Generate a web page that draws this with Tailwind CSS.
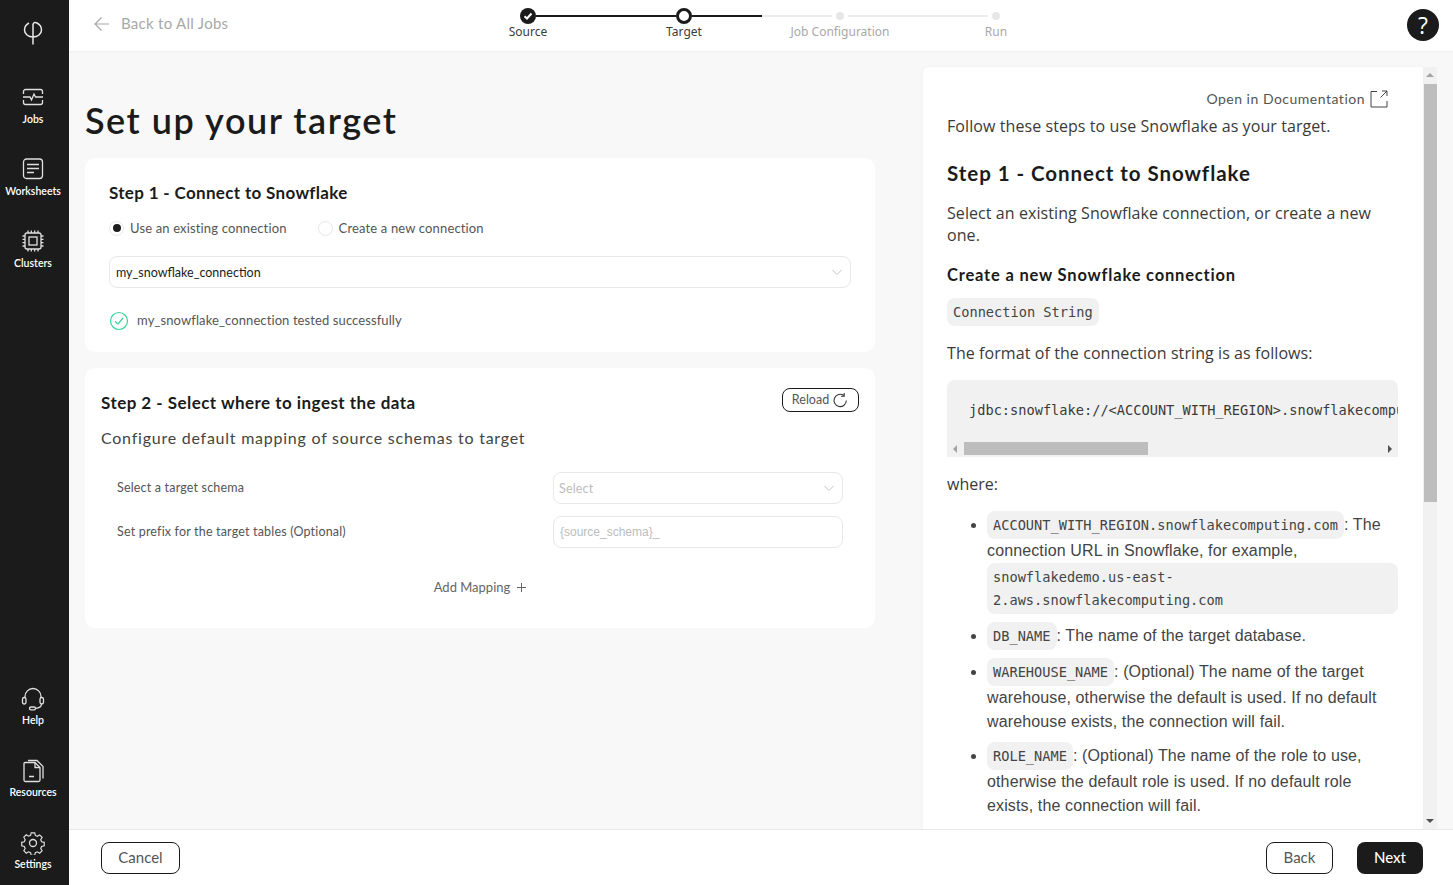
<!DOCTYPE html>
<html lang="en">
<head>
  <meta charset="UTF-8">
  <title>Set up your target</title>
  <script src="https://cdn.jsdelivr.net/npm/@tailwindcss/browser@4"></script>
</head>
<body class="h-[885px] w-[1453px] overflow-hidden flex bg-[#f8f8f8] text-[#1b1b1b] font-['Lato',sans-serif]">
  <!-- sidebar -->
  <aside class="w-[69px] h-full bg-[#1b1b1b] text-white flex flex-col items-center shrink-0 pr-[3px]">
    <div class="h-[85px] w-full flex justify-center pt-[20px]">
      <svg width="22" height="28" viewBox="22 20 22 28" fill="none" stroke="#e8e8e8" stroke-width="1.5"><path d="M29 23c-3 1.500-4.500 4-4.500 7 0 4 3.800 7 8.500 7s8.500-3 8.500-7c0-3-1.500-5.500-4.500-7-2-1-3.500-.5-4 1.500V44.500"/></svg>
    </div>
    <a class="h-[72px] flex flex-col items-center text-[10.5px] font-semibold">
      <svg class="w-6 h-6" viewBox="0 0 24 24" fill="none" stroke="#e0e0e0" stroke-width="1.3"><path d="M2.500 9V6.500a2 2 0 0 1 2-2h15a2 2 0 0 1 2 2V9M2.500 15v2.500a2 2 0 0 0 2 2h15a2 2 0 0 0 2-2V15M2 12h7l1.500 3 2.500-6 1.500 3h7.500"/></svg>
      <span class="mt-[3px]">Jobs</span>
    </a>
    <a class="h-[72px] flex flex-col items-center text-[10.5px] font-semibold">
      <svg class="w-6 h-6" viewBox="0 0 24 24" fill="none" stroke="#e0e0e0" stroke-width="1.300"><rect x="2.500" y="2" width="19" height="19.500" rx="3"/><path d="M6 7.500h12M6 11.500h12M6 15.500h7"/></svg>
      <span class="mt-[3px]">Worksheets</span>
    </a>
    <a class="h-[72px] flex flex-col items-center text-[10.5px] font-semibold">
      <svg class="w-6 h-6" viewBox="0 0 24 24" fill="none" stroke="#e0e0e0" stroke-width="1.300"><rect x="4" y="4" width="16" height="16" rx="2"/><rect x="8" y="8" width="8" height="8"/><path d="M7 1.500V4M10.300 1.500V4M13.700 1.500V4M17 1.500V4M7 20v2.500M10.300 20v2.500M13.700 20v2.500M17 20v2.500M1.500 7H4M1.500 10.300H4M1.500 13.700H4M1.500 17H4M20 7h2.500M20 10.300h2.500M20 13.700h2.500M20 17h2.500"/></svg>
      <span class="mt-[3px]">Clusters</span>
    </a>
    <a class="mt-auto h-[72px] flex flex-col items-center text-[10.5px] font-semibold">
      <svg class="w-6 h-6" viewBox="0 0 24 24" fill="none" stroke="#e0e0e0" stroke-width="1.300"><path d="M4 11V9.500a8 8 0 0 1 16 0V11"/><rect x="1.500" y="10.500" width="3.500" height="6.500" rx="1.700"/><rect x="19" y="10.500" width="3.500" height="6.500" rx="1.700"/><path d="M20.500 17c0 3-2.500 4-6 4.300"/><rect x="8.500" y="20" width="6" height="2.800" rx="1.400"/></svg>
      <span class="mt-[2px]">Help</span>
    </a>
    <a class="h-[72px] flex flex-col items-center text-[10.5px] font-semibold">
      <svg class="w-6 h-6" viewBox="0 0 24 24" fill="none" stroke="#e0e0e0" stroke-width="1.300"><path d="M4 3.500h10l5 5V21a1.500 1.500 0 0 1-1.500 1.500h-13A1.500 1.500 0 0 1 3 21V4.500a1 1 0 0 1 1-1z"/><path d="M7 1.500h9l6 6v12M14 3.500v5h5M10 10v.1M10 13.500v.1M8 17.500h5"/></svg>
      <span class="mt-[2px]">Resources</span>
    </a>
    <a class="h-[54px] flex flex-col items-center text-[10.5px] font-semibold">
      <svg class="w-6 h-6" viewBox="0 0 24 24" fill="none" stroke="#e0e0e0" stroke-width="1.300"><circle cx="12" cy="12" r="3.500"/><path d="M10 1.500h4l.7 3 2.300 1 2.600-1.600 2.800 2.800-1.600 2.600 1 2.300 3 .7v4l-3 .7-1 2.300 1.600 2.600-2.800 2.800-2.600-1.600-2.300 1-.7 3h-4l-.7-3-2.300-1-2.600 1.600-2.800-2.800 1.600-2.600-1-2.300-3-.7v-4l3-.7 1-2.300L1.600 6.500l2.800-2.800 2.600 1.600 2.300-1z" transform="translate(1.400 .5) scale(.88)"/></svg>
      <span class="mt-[2px]">Settings</span>
    </a>
  </aside>

  <div class="flex-1 min-w-0 flex flex-col">
    <!-- top bar -->
    <header class="h-[51px] bg-white shrink-0 flex shadow-[0_1px_2px_rgba(0,0,0,0.04)] relative">
      <div class="w-[381px] pl-[24px] pt-[12px] flex items-start gap-[11px] text-[15px] tracking-[0.28px] text-[#a8a8a8]">
        <svg class="w-[17px] h-[18px] mt-[3px]" viewBox="0 0 17 18" fill="none" stroke="#a8a8a8" stroke-width="1.200"><path d="M16 9H2M8.500 2.500 2 9l6.500 6.500"/></svg>
        <span>Back to All Jobs</span>
      </div>
      <div class="w-[624px] pt-2">
        <div class="flex items-center pl-[70px] h-4">
          <span class="w-4 h-4 rounded-full bg-[#1b1b1b] flex items-center justify-center">
            <svg width="10" height="10" viewBox="0 0 10 10" fill="none" stroke="#fff" stroke-width="2"><path d="M1.500 5.200 4 7.500 8.500 2.500"/></svg>
          </span>
          <span class="w-[140px] h-0.5 bg-[#1b1b1b]"></span>
          <span class="w-4 h-4 rounded-full border-[3px] border-[#1b1b1b] bg-white"></span>
          <span class="w-[70px] h-0.5 bg-[#1b1b1b]"></span>
          <span class="w-[70px] h-0.5 bg-[#ececec]"></span>
          <span class="w-2 h-2 mx-1 rounded-full bg-[#e6e6e6]"></span>
          <span class="w-[140px] h-0.5 bg-[#ececec]"></span>
          <span class="w-2 h-2 mx-1 rounded-full bg-[#e6e6e6]"></span>
        </div>
        <div class="grid grid-cols-4 text-center text-[12px] leading-4 mt-0 font-['Noto_Sans',sans-serif]">
          <span class="text-[#3c3c3c]">Source</span>
          <span class="text-[#3c3c3c]">Target</span>
          <span class="text-[#a8a8a8]">Job Configuration</span>
          <span class="text-[#a8a8a8]">Run</span>
        </div>
      </div>
      <div class="ml-auto pr-[14px] pt-[9px]">
        <div class="w-8 h-8 rounded-full bg-[#1b1b1b] text-white flex items-center justify-center text-[23px] font-normal font-['Open_Sans',sans-serif]">?</div>
      </div>
    </header>

    <div class="flex-1 min-h-0 flex">
      <!-- left column -->
      <main class="w-[854px] shrink-0 pl-4 pr-[48px]">
        <h1 class="text-[36px] leading-[44px] font-semibold mt-[47px] mb-[16px] tracking-[1.55px]">Set up your target</h1>

        <section class="bg-white rounded-[10px] h-[194px] px-6 pt-[25px]">
          <h2 class="text-[17px] leading-5 font-bold tracking-[0.33px]">Step 1 - Connect to Snowflake</h2>
          <div class="flex items-center mt-[15px] text-[13px] leading-[20px] tracking-[0.15px] text-[#555]">
            <span class="w-[15px] h-[15px] rounded-full border border-[#e6e6e6] flex items-center justify-center"><span class="w-[8px] h-[8px] rounded-full bg-[#1b1b1b]"></span></span>
            <span class="ml-[6px]">Use an existing connection</span>
            <span class="w-[15px] h-[15px] ml-[31px] rounded-full border border-[#e6e6e6]"></span>
            <span class="ml-[6px]">Create a new connection</span>
          </div>
          <div class="mt-[18px] h-8 border border-[#e8e8e8] rounded-[8px] flex items-center justify-between px-[6px] text-[12.5px]">
            <span class="pt-[2px]">my_snowflake_connection</span>
            <svg class="mr-[1px]" width="12" height="12" viewBox="0 0 12 12" fill="none" stroke="#c4c4c4"><path d="M1.500 4 6 8.500 10.500 4"/></svg>
          </div>
          <div class="flex items-center mt-[23px] text-[13px] tracking-[0.1px] text-[#555]">
            <svg width="20" height="20" viewBox="0 0 20 20" fill="none" stroke="#35d39a" stroke-width="1.200"><circle cx="10" cy="10" r="8.500"/><path d="M6 10.500 9 13l5-6"/></svg>
            <span class="ml-[8px]">my_snowflake_connection tested successfully</span>
          </div>
        </section>

        <section class="bg-white rounded-[10px] h-[260px] mt-4 px-4 pt-[20px]">
          <div class="flex justify-between items-start">
            <h2 class="text-[17px] leading-5 font-bold mt-[5px] tracking-[0.46px]">Step 2 - Select where to ingest the data</h2>
            <button class="h-6 w-[77px] border border-[#1b1b1b] rounded-[8px] flex items-center justify-center gap-[3px] text-[12.500px] text-[#555]">Reload
              <svg width="17" height="17" viewBox="0 0 16 16" fill="none" stroke="#333"><path d="M13.500 8A5.800 5.800 0 1 1 11 3.200M11.500 1v3h-3"/></svg>
            </button>
          </div>
          <p class="text-[16px] leading-6 mt-[13px] tracking-[0.76px] text-[#444]">Configure default mapping of source schemas to target</p>
          <div class="grid grid-cols-[436px_290px] gap-y-[12px] items-center mt-[22px] ml-4 text-[12.500px] tracking-[0.18px] text-[#555]">
            <span>Select a target schema</span>
            <div class="h-8 border border-[#e8e8e8] rounded-[8px] flex items-center justify-between px-[5px] text-[#bdbdbd]"><span class="pt-[2px]">Select</span>
              <svg class="mr-[2px]" width="12" height="12" viewBox="0 0 12 12" fill="none" stroke="#c4c4c4"><path d="M1.500 4 6 8.500 10.500 4"/></svg>
            </div>
            <span>Set prefix for the target tables (Optional)</span>
            <div class="h-8 border border-[#e8e8e8] rounded-[8px] flex items-center px-[6px] text-[#bdbdbd] text-[12px] tracking-normal font-['Liberation_Sans',sans-serif]">{source_schema}_</div>
          </div>
          <div class="flex justify-center items-center gap-[7px] mt-[30px] text-[13px] text-[#666]">Add Mapping
            <svg width="9" height="9" viewBox="0 0 9 9" stroke="#666"><path d="M4.500 0v9M0 4.500h9"/></svg>
          </div>
        </section>
      </main>

      <!-- documentation panel -->
      <div class="pt-4 flex items-stretch h-[778px]">
        <article class="w-[500px] h-full overflow-hidden bg-white rounded-tl-[6px] pl-6 pr-[25px] pt-[22px] font-['Open_Sans',sans-serif] text-[#3a3a3a] text-[16px] leading-[22px] shadow-[0_0_4px_rgba(0,0,0,0.04)]">
          <a class="flex justify-end items-center gap-[5px] pr-[10px] text-[14px] leading-5 tracking-[0.5px] font-['Lato',sans-serif] text-[#555]">Open in Documentation
            <svg width="18" height="18" viewBox="0 0 18 18" fill="none" stroke="#444"><path d="M7 1.500H1v15.500h16V11M10.500 7.500 17 1M12 1h5v5"/></svg>
          </a>
          <p class="mt-[6px] tracking-[0.08px]">Follow these steps to use Snowflake as your target.</p>
          <h2 class="text-[20.500px] leading-7 font-bold text-[#1b1b1b] mt-[22px] font-['Lato',sans-serif] tracking-[0.95px]">Step 1 - Connect to Snowflake</h2>
          <p class="mt-[15px] tracking-[0.08px]">Select an existing Snowflake connection, or create a new one.</p>
          <h3 class="text-[16.500px] leading-6 font-bold text-[#1b1b1b] mt-[17px] font-['Lato',sans-serif] tracking-[0.81px]">Create a new Snowflake connection</h3>
          <div class="mt-[11px]"><code class="inline-block h-7 leading-7 px-[6px] bg-[#f1f1f1] rounded-[8px] text-[13.650px] text-[#444] font-['DejaVu_Sans_Mono',monospace]">Connection String</code></div>
          <p class="mt-[16px] tracking-[0.08px]">The format of the connection string is as follows:</p>
          <div class="mt-[16px] h-[77px] pb-[2px] bg-[#f1f1f1] rounded-t-[8px] flex flex-col overflow-hidden">
            <pre class="flex-1 pl-[22px] pt-[20px] overflow-hidden text-[13.650px] leading-5 font-['DejaVu_Sans_Mono',monospace]">jdbc:snowflake://&lt;ACCOUNT_WITH_REGION&gt;.snowflakecomputing.com</pre>
            <div class="h-[13px] shrink-0 flex items-center justify-between px-[6px] relative">
              <span class="border-y-[4px] border-r-[4px] border-y-transparent border-r-[#a3a3a3]"></span>
              <span class="absolute left-[17px] top-0 w-[184px] h-[13px] bg-[#bdbdbd]"></span>
              <span class="border-y-[4px] border-l-[4px] border-y-transparent border-l-[#505050]"></span>
            </div>
          </div>
          <p class="mt-[16px]">where:</p>
          <ul class="list-disc pl-10 mt-[16px] font-['Liberation_Sans',sans-serif] text-[16px] leading-6 tracking-[0.13px] text-[#444]">
            <li><code class="inline-block h-7 leading-7 bg-[#f1f1f1] rounded-[8px] px-[6px] text-[13.650px] tracking-normal font-['DejaVu_Sans_Mono',monospace]">ACCOUNT_WITH_REGION.snowflakecomputing.com</code>: The connection URL in Snowflake, for example, <code class="block bg-[#f1f1f1] rounded-[8px] px-[6px] py-[2.5px] text-[13.650px] tracking-normal leading-[23px] font-['DejaVu_Sans_Mono',monospace]">snowflakedemo.us-east-<br>2.aws.snowflakecomputing.com</code></li>
            <li class="mt-2"><code class="inline-block h-7 leading-7 bg-[#f1f1f1] rounded-[8px] px-[6px] text-[13.650px] tracking-normal font-['DejaVu_Sans_Mono',monospace]">DB_NAME</code>: The name of the target database.</li>
            <li class="mt-2"><code class="inline-block h-7 leading-7 bg-[#f1f1f1] rounded-[8px] px-[6px] text-[13.650px] tracking-normal font-['DejaVu_Sans_Mono',monospace]">WAREHOUSE_NAME</code>: (Optional) The name of the target warehouse, otherwise the default is used. If no default warehouse exists, the connection will fail.</li>
            <li class="mt-2"><code class="inline-block h-7 leading-7 bg-[#f1f1f1] rounded-[8px] px-[6px] text-[13.650px] tracking-normal font-['DejaVu_Sans_Mono',monospace]">ROLE_NAME</code>: (Optional) The name of the role to use, otherwise the default role is used. If no default role exists, the connection will fail.</li>
          </ul>
        </article>
        <!-- panel scrollbar -->
        <div class="w-[14px] h-full bg-[#f1f1f1] flex flex-col items-center justify-between pt-[6px] pb-[6px] relative">
          <span class="border-x-[4px] border-b-[4px] border-x-transparent border-b-[#a3a3a3]"></span>
          <span class="absolute left-px top-[17px] w-[13px] h-[418px] bg-[#bdbdbd]"></span>
          <span class="border-x-[4px] border-t-[4px] border-x-transparent border-t-[#505050]"></span>
        </div>
      </div>
    </div>

    <!-- footer -->
    <footer class="h-14 shrink-0 bg-white border-t border-[#e8e8e8] flex items-center pl-8 pr-[30px] gap-6 relative z-10 text-[15px]">
      <button class="w-[79px] h-8 border border-[#1b1b1b] rounded-[8px] text-[#555]">Cancel</button>
      <button class="ml-auto w-[67px] h-8 border border-[#1b1b1b] rounded-[8px] text-[#555]">Back</button>
      <button class="w-[66px] h-8 bg-[#1b1b1b] rounded-[8px] text-white font-medium">Next</button>
    </footer>
  </div>
</body>
</html>
